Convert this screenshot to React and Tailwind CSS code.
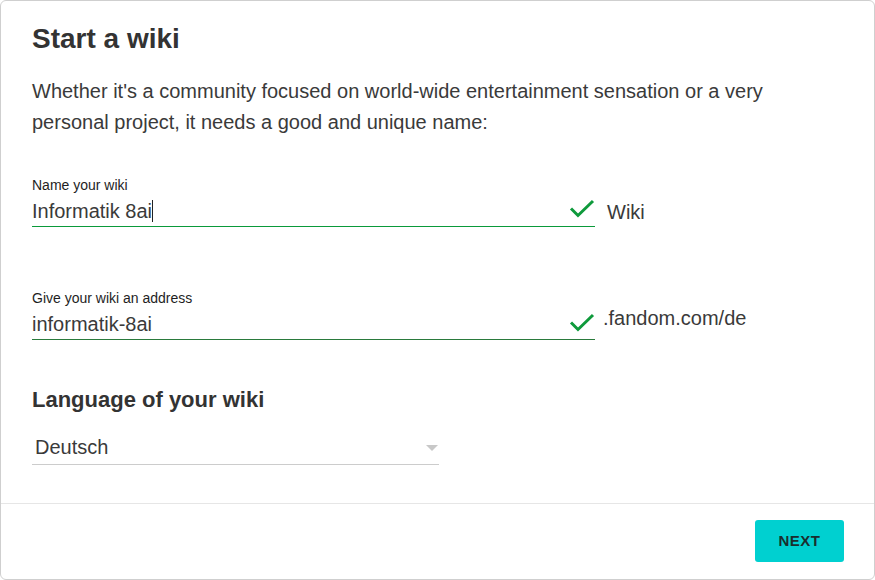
const FONT = { fontFamily: '"Liberation Sans", Arial, sans-serif' }

function Check() {
  return (
    <svg width="26" height="20" viewBox="0 0 26 20" className="shrink-0">
      <path
        d="M2 9.5 L9 16.5 L24 2"
        fill="none"
        stroke="#0f9a3c"
        strokeWidth="3"
      />
    </svg>
  )
}

function Field({ label, value, suffix, caret, line, checkClass, suffixClass }) {
  return (
    <div className="flex items-end">
      <div className="w-[563px]">
        <div className="text-[14px] leading-[16px] text-[#1e1e1e]">{label}</div>
        <div className={`flex items-end h-[34px] border-b pb-[3px] ${line}`}>
          <span className="flex-1 text-[20px] leading-[23px] text-[#3a3a3a]">
            {value}
            {caret && <span className="inline-block w-px h-[22px] bg-[#222] align-[-4px]" />}
          </span>
          <span className={checkClass}>
            <Check />
          </span>
        </div>
      </div>
      <span className={`text-[20px] leading-[23px] text-[#3a3a3a] ${suffixClass}`}>{suffix}</span>
    </div>
  )
}

export default function App() {
  return (
    <div style={FONT} className="w-[875px] h-[580px] bg-white">
      <div className="h-full border border-[#cfcfcf] rounded-[6px] flex flex-col">
        <div className="flex-1 px-[31px] pt-[20px]">
          <h1 className="text-[28px] font-bold text-[#333] leading-[36px]">Start a wiki</h1>
          <p className="mt-[19px] text-[20px] leading-[31px] text-[#3a3a3a] w-[760px]">
            Whether it's a community focused on world-wide entertainment sensation or a very
            personal project, it needs a good and unique name:
          </p>

          <div className="mt-[39px]">
            <Field
              label="Name your wiki"
              value="Informatik 8ai"
              caret
              suffix="Wiki"
              line="border-[#0a9a3a]"
              checkClass="mb-[4px]"
              suffixClass="ml-[12px] mb-[3px]"
            />
          </div>

          <div className="mt-[63px]">
            <Field
              label="Give your wiki an address"
              value="informatik-8ai"
              suffix=".fandom.com/de"
              line="border-[#2a7a3c]"
              checkClass="mb-[3px]"
              suffixClass="ml-[8px] mb-[10px]"
            />
          </div>

          <h2 className="mt-[46px] text-[22px] font-bold text-[#333] leading-[28px]">
            Language of your wiki
          </h2>
          <div className="mt-[16px] w-[407px] h-[35px] border-b border-[#cccccc] flex items-center justify-between pl-[3px] pr-[1px]">
            <span className="text-[20px] text-[#3a3a3a]">Deutsch</span>
            <span className="w-0 h-0 border-l-[6px] border-r-[6px] border-t-[6px] border-l-transparent border-r-transparent border-t-[#c8c8c8] mt-[2px]" />
          </div>
        </div>

        <div className="border-t border-[#e6e6e6] h-[76px] flex items-start justify-end pr-[30px] pt-[16px]">
          <button className="w-[89px] h-[42px] rounded-[3px] bg-[#00d0d0] text-[15px] font-bold tracking-[0.5px] text-[#1a2e2e]">
            NEXT
          </button>
        </div>
      </div>
    </div>
  )
}
